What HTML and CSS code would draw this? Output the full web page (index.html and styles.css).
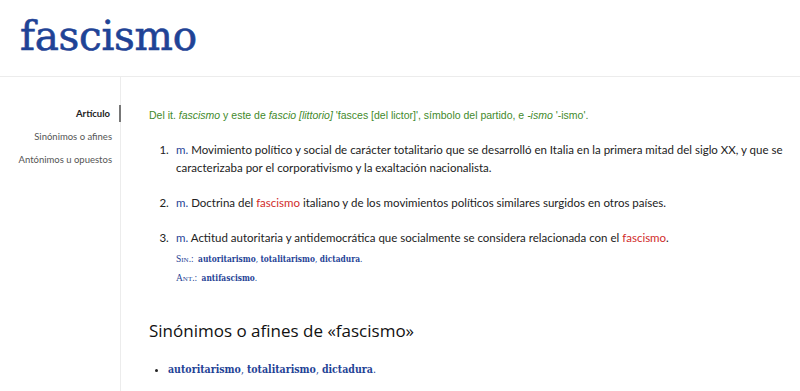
FILE: index.html
```html
<!DOCTYPE html>
<html lang="es">
<head>
    <meta charset="UTF-8">
    <meta name="viewport" content="width=device-width, initial-scale=1.0">
    <title>fascismo</title>
    <link rel="stylesheet" href="styles.css">
</head>
<body>
    <header class="page-header">
        <h1 class="entry-title">fascismo</h1>
    </header>

    <div class="page-body">
        <nav class="side-nav">
            <a class="side-link active" href="#articulo">Artículo</a>
            <a class="side-link" href="#sinonimos">Sinónimos o afines</a>
            <a class="side-link" href="#antonimos">Antónimos u opuestos</a>
        </nav>

        <main class="article" id="articulo">
            <p class="etym">Del it. <i>fascismo</i> y este de <i>fascio [littorio]</i> 'fasces [del lictor]', símbolo del partido, e <i>-ismo</i> '-ismo'.</p>

            <ol class="senses">
                <li><span class="abbr">m.</span> Movimiento político y social de carácter totalitario que se desarrolló en Italia en la primera mitad del siglo XX, y que se caracterizaba por el corporativismo y la exaltación nacionalista.</li>
                <li><span class="abbr">m.</span> Doctrina del <a class="ref" href="#">fascismo</a> italiano y de los movimientos políticos similares surgidos en otros países.</li>
                <li><span class="abbr">m.</span> Actitud autoritaria y antidemocrática que socialmente se considera relacionada con el <a class="ref" href="#">fascismo</a>.
                    <div class="rel first"><span class="rel-tag">Sin.:</span> <b>autoritarismo</b>, <b>totalitarismo</b>, <b>dictadura</b>.</div>
                    <div class="rel"><span class="rel-tag">Ant.:</span> <b>antifascismo</b>.</div>
                </li>
            </ol>

            <h2 class="section-title" id="sinonimos">Sinónimos o afines de «fascismo»</h2>
            <ul class="syn-list">
                <li><b>autoritarismo</b>, <b>totalitarismo</b>, <b>dictadura</b>.</li>
            </ul>
        </main>
    </div>
</body>
</html>
```

FILE: styles.css
```css
body {
    margin: 0;
    background: #fff;
    font-family: Lato, "Open Sans", sans-serif;
    color: #222;
    overflow: hidden;
}
.page-header {
    height: 77px;
    border-bottom: 1px solid #ececec;
    padding-left: 20px;
    box-sizing: border-box;
}
.entry-title {
    margin: 0;
    padding-top: 11px;
    font-family: "DejaVu Serif", serif;
    font-weight: normal;
    font-size: 40.5px;
    line-height: 50px;
    letter-spacing: -0.3px;
    color: #1f4396;
    -webkit-text-stroke: 0.6px #1f4396;
}
.page-body {
    display: flex;
}
.side-nav {
    width: 121px;
    flex-shrink: 0;
    border-right: 1px solid #ececec;
    min-height: 320px;
    padding-top: 28px;
    display: flex;
    flex-direction: column;
    align-items: flex-end;
    box-sizing: border-box;
}
.side-link {
    font-size: 9.5px;
    color: #555;
    text-decoration: none;
    line-height: 17px;
    padding-right: 9px;
    margin-bottom: 6px;
    margin-right: -1px;
}
.side-link.active {
    color: #222;
    font-weight: bold;
    border-right: 2px solid #777;
}
.article {
    padding: 30px 0 0 28px;
    flex: 1;
}
.etym {
    margin: 0 0 17px;
    font-family: "Liberation Sans", Arial, sans-serif;
    font-size: 10.5px;
    line-height: 17px;
    color: #3f8a2c;
}
.senses {
    margin: 0;
    padding-left: 27px;
    font-size: 11.5px;
    line-height: 18px;
}
.senses li {
    margin-bottom: 17px;
}
.senses li::marker {
    content: counter(list-item) ".\2002\2009";
}
.abbr {
    color: #1f4396;
}
.ref {
    color: #d12b2b;
    text-decoration: none;
}
.rel {
    font-family: "DejaVu Serif", serif;
    font-stretch: condensed;
    font-size: 8.3px;
    line-height: 19px;
    color: #1f4396;
}
.rel.first {
    margin-top: 3px;
}
.rel-tag {
    font-variant: small-caps;
    font-family: "Liberation Serif", serif;
    font-size: 9.5px;
    margin-right: 2px;
}
.section-title {
    margin: 30px 0 0;
    font-family: "Open Sans", sans-serif;
    font-weight: normal;
    font-size: 17px;
    line-height: 26px;
    color: #111;
}
.syn-list {
    margin: 16px 0 0;
    padding-left: 19px;
    font-family: "DejaVu Serif", serif;
    font-stretch: condensed;
    font-size: 10.5px;
    line-height: 18px;
    color: #1f4396;
}
.syn-list li::marker {
    color: #222;
}
```
